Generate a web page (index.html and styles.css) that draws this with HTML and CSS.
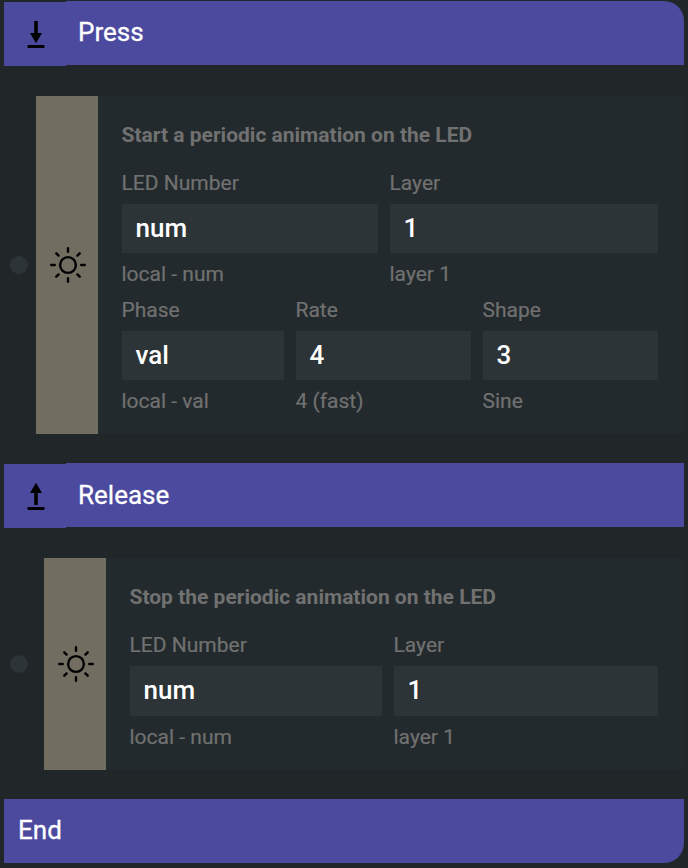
FILE: index.html
```html
<!DOCTYPE html>
<html lang="en">
<head>
<meta charset="utf-8">
<title>Event configuration</title>
<link rel="stylesheet" href="styles.css">
</head>
<body>
<svg width="0" height="0" class="defs">
  <symbol id="sun" viewBox="-20 -20 40 40">
    <g fill="none" stroke="#000" stroke-width="2.4" stroke-linecap="round">
      <circle r="7.9"/>
      <path d="M0-16.8V-13.2M0 16.8V13.2M-16.8 0H-13.2M16.8 0H13.2M-11.7-11.7L-9.4-9.4M11.7-11.7L9.4-9.4M-11.7 11.7L-9.4 9.4M11.7 11.7L9.4 9.4"/>
    </g>
  </symbol>
</svg>
<main class="events">
  <header class="bar bar-first">
    <span class="bar-icon"><svg width="62" height="64" viewBox="0 0 62 64"><path d="M30.2 19h3.6v12h4.2L32 41.2 26 31h4.2zM23.6 43h16.8v3H23.6z"/></svg></span>
    <span class="bar-name">Press</span>
  </header>
  <section class="row row-press">
    <span class="dot"></span>
    <div class="strip"><svg width="40" height="40"><use href="#sun"/></svg></div>
    <div class="card">
      <h2>Start a periodic animation on the LED</h2>
      <div class="fields fields-led">
        <label class="field"><span>LED Number</span><b class="value">num</b><span>local - num</span></label>
        <label class="field"><span>Layer</span><b class="value">1</b><span>layer 1</span></label>
      </div>
      <div class="fields fields-wave">
        <label class="field"><span>Phase</span><b class="value">val</b><span>local - val</span></label>
        <label class="field"><span>Rate</span><b class="value">4</b><span>4 (fast)</span></label>
        <label class="field"><span>Shape</span><b class="value">3</b><span>Sine</span></label>
      </div>
    </div>
  </section>
  <header class="bar bar-middle">
    <span class="bar-icon"><svg width="62" height="64" viewBox="0 0 62 64"><path d="M30.2 41h3.6V29h4.2L32 18.8 26 29h4.2zM23.6 43h16.8v3H23.6z"/></svg></span>
    <span class="bar-name">Release</span>
  </header>
  <section class="row row-release">
    <span class="dot"></span>
    <div class="strip"><svg width="40" height="40"><use href="#sun"/></svg></div>
    <div class="card">
      <h2>Stop the periodic animation on the LED</h2>
      <div class="fields fields-stop">
        <label class="field"><span>LED Number</span><b class="value">num</b><span>local - num</span></label>
        <label class="field"><span>Layer</span><b class="value">1</b><span>layer 1</span></label>
      </div>
    </div>
  </section>
  <footer class="bar bar-last"><span class="bar-name">End</span></footer>
</main>
</body>
</html>
```
FILE: styles.css
```css
* { box-sizing: border-box; }
body {
  margin: 0;
  height: 868px;
  overflow: hidden;
  background: #212629;
  font-family: Roboto, "Liberation Sans", sans-serif;
  color: #fff;
}
.defs { display: none; }
.events { padding: 1px 4px 0; }
.bar {
  display: flex;
  height: 64px;
  background: linear-gradient(#212629, #212629) 0 0 / 62px 1px no-repeat, #4b4a9f;
}
.bar-first { border-top-right-radius: 20px; }
.bar-last {
  padding-left: 2px;
  background: #4b4a9f;
  border-bottom-right-radius: 20px;
}
.bar-icon {
  width: 62px;
  height: 64px;
  margin-top: 1px;
  background: #4b4a9f;
}
.bar-icon svg { display: block; }
.bar-name {
  padding-left: 12px;
  font-size: 26px;
  line-height: 62px;
  -webkit-text-stroke: 0.3px #fff;
}
.bar-middle .bar-name { line-height: 64px; }
.row { display: flex; align-items: stretch; }
.row-press { height: 338px; margin: 31px 0 29px; }
.row-release { height: 212px; margin: 31px 0 29px; }
.dot {
  flex: none;
  align-self: center;
  width: 18px;
  height: 18px;
  margin: 0 8px 0 6px;
  border-radius: 50%;
  background: #2d3437;
}
.row-release .dot { margin-right: 16px; }
.strip {
  flex: none;
  display: flex;
  align-items: center;
  justify-content: center;
  width: 62px;
  padding-left: 2px;
  background: #716d61;
}
.card {
  flex: 1;
  padding: 24px 26px 0 24px;
  background: #232a2d;
  color: #717171;
  font-size: 21px;
  line-height: 30px;
}
.card h2 {
  margin: 0 0 18px;
  font-size: 21px;
  font-weight: 700;
  line-height: 30px;
  text-indent: -0.5px;
}
.fields { display: grid; column-gap: 12px; }
.fields + .fields { margin-top: 6px; }
.fields-led { grid-template-columns: 256px 1fr; }
.fields-wave { grid-template-columns: 162px 1fr 1fr; }
.fields-stop { grid-template-columns: 252px 1fr; }
.field {
  display: flex;
  flex-direction: column;
  gap: 6px;
  text-indent: -0.5px;
  -webkit-text-stroke: 0.2px #717171;
}
.value {
  height: 49px;
  padding-left: 14px;
  background: #2d3437;
  color: #fff;
  font-size: 26px;
  font-weight: 500;
  line-height: 48px;
  -webkit-text-stroke: 0;
}
.row-release .value { height: 50px; }
```
